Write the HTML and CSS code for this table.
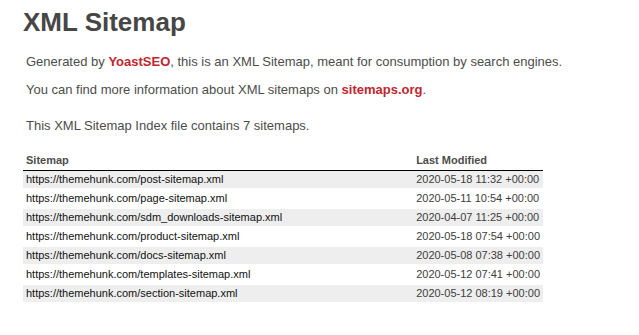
FILE: index.html
```html
<!DOCTYPE html>
<html lang="en">
<head>
<meta charset="utf-8">
<title>XML Sitemap</title>
<link rel="stylesheet" href="styles.css">
</head>
<body>
<div class="content">
  <h1 class="title">XML Sitemap</h1>
  <p class="expl expl-first">Generated by <a href="#" class="red">YoastSEO</a>, this is an XML Sitemap, meant for consumption by search engines.</p>
  <p class="expl">You can find more information about XML sitemaps on <a href="#" class="red">sitemaps.org</a>.</p>
  <p class="expl expl-count">This XML Sitemap Index file contains 7 sitemaps.</p>
  <table class="sitemap">
    <thead>
      <tr><th class="col-url">Sitemap</th><th class="col-date">Last Modified</th></tr>
    </thead>
    <tbody>
      <tr><td class="url"><a href="#">https://themehunk.com/post-sitemap.xml</a></td><td class="date">2020-05-18 11:32 +00:00</td></tr>
      <tr><td class="url"><a href="#">https://themehunk.com/page-sitemap.xml</a></td><td class="date">2020-05-11 10:54 +00:00</td></tr>
      <tr><td class="url"><a href="#">https://themehunk.com/sdm_downloads-sitemap.xml</a></td><td class="date">2020-04-07 11:25 +00:00</td></tr>
      <tr><td class="url"><a href="#">https://themehunk.com/product-sitemap.xml</a></td><td class="date">2020-05-18 07:54 +00:00</td></tr>
      <tr><td class="url"><a href="#">https://themehunk.com/docs-sitemap.xml</a></td><td class="date">2020-05-08 07:38 +00:00</td></tr>
      <tr><td class="url"><a href="#">https://themehunk.com/templates-sitemap.xml</a></td><td class="date">2020-05-12 07:41 +00:00</td></tr>
      <tr><td class="url"><a href="#">https://themehunk.com/section-sitemap.xml</a></td><td class="date">2020-05-12 08:19 +00:00</td></tr>
    </tbody>
  </table>
</div>
</body>
</html>
```
FILE: styles.css
```css
html, body {
  margin: 0;
  padding: 0;
  background: #fff;
}
body {
  font-family: "Liberation Sans", Arial, Helvetica, sans-serif;
  font-size: 13px;
  color: #4d4c4c;
}
.content {
  padding-left: 23px;
}
.title {
  margin: 7px 0 0 0;
  font-size: 26px;
  font-weight: bold;
  line-height: 30px;
  color: #474646;
}
.expl {
  margin: 13px 3px 0 3px;
  line-height: 15px;
}
.expl-first {
  margin-top: 17px;
}
.expl-count {
  margin-top: 21px;
}
.red {
  color: #c1262f;
  font-weight: bold;
  text-decoration: none;
}
.sitemap {
  margin-top: 21px;
  width: 520px;
  border-collapse: separate;
  border-spacing: 0;
}
.sitemap th {
  text-align: left;
  font-size: 11px;
  font-weight: bold;
  line-height: 13px;
  padding: 0 3px 3px 3px;
  border-bottom: 1px solid #000;
  color: #4d4c4c;
}
.col-url {
  width: 385px;
}
.sitemap td {
  font-size: 11px;
  line-height: 13px;
  height: 19px;
  padding: 0 3px;
  box-sizing: border-box;
  border-bottom: 2px solid #fff;
  vertical-align: middle;
  white-space: nowrap;
}
.sitemap tbody tr:nth-child(odd) td {
  background-color: #eee;
}
.sitemap td.url a {
  color: #111;
  text-decoration: none;
}
.sitemap td.date {
  color: #3d3d3d;
}
```
